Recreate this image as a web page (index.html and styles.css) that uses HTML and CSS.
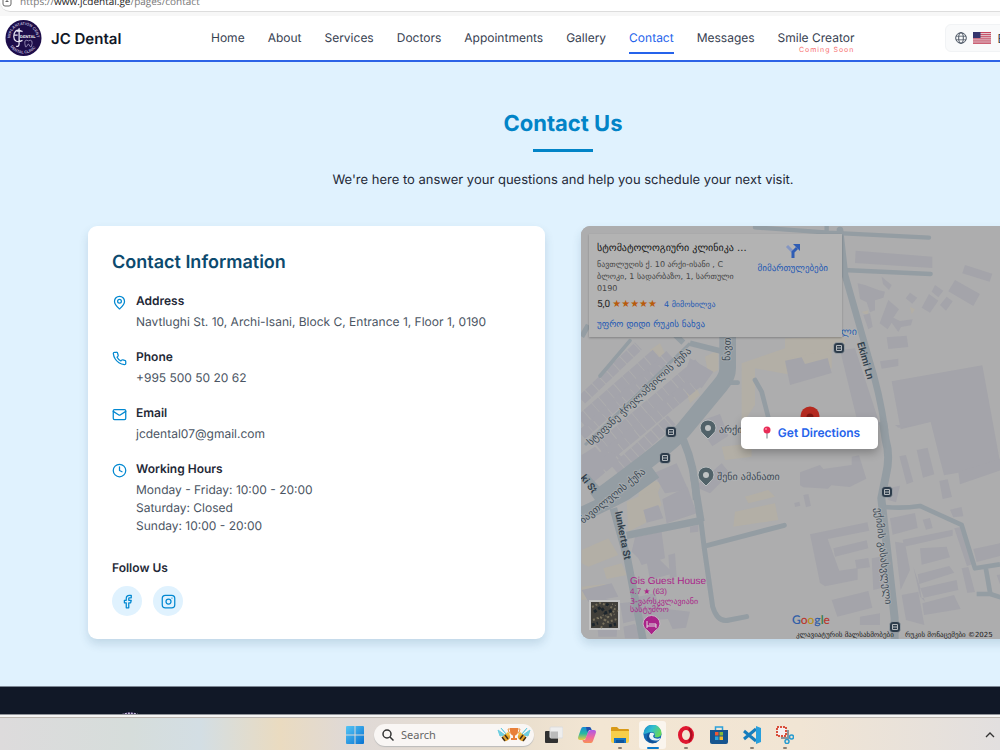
FILE: index.html
```html
<!DOCTYPE html>
<html lang="en">
<head>
<meta charset="utf-8">
<title>JC Dental - Contact</title>
<link rel="stylesheet" href="styles.css">
</head>
<body>
<div class="address-bar">
  <svg class="site-icon" viewBox="0 0 10 12"><path d="M1 0v8q0 2 2 2h4q2 0 2-2V0M3.500 5.500h3M5 3v2" fill="none" stroke="#666"/></svg>
  <span class="url">https://<b>www.jcdental.ge</b>/pages/contact</span>
</div>
<div class="viewport">
<div class="page">
  <header class="header">
    <a class="brand" href="#">
      <svg class="logo" viewBox="0 0 38 38">
        <circle cx="19" cy="19" r="18.500" fill="#1d0d4a"/>
        <path id="arc-top" d="M5.500 19a13.500 13.500 0 0 1 27 0" fill="none"/>
        <path id="arc-bottom" d="M3 19a16 16 0 0 0 32 0" fill="none"/>
        <g fill="#b9b2d2" font-family="Liberation Sans" font-weight="bold">
          <text font-size="4"><textPath href="#arc-top" startOffset="0">IMPLANTATION CENTER</textPath></text>
          <text font-size="4"><textPath href="#arc-bottom" startOffset="9">DENTAL CLINIC</textPath></text>
          <text x="15.500" y="19.500" font-size="4" fill="#fff">DENTAL</text>
        </g>
        <g fill="none" stroke="#e9e6f3" stroke-width="1.300"><path d="M14.500 9v16q0 3-3 2.500M18 12.500c-7-4-9 1-9 5s3 7 9 4M9 16h4M12 12h5"/><path d="M20.500 22q2-1.500 3.500 0 2-1.500 3.500 0 1 2-.5 6h-1l-2-3-2 3h-1q-1-4-.5-6z" stroke="#a79fc6" stroke-width=".8"/></g>
      </svg>
      <span>JC Dental</span>
    </a>
    <nav class="nav">
      <a href="#">Home</a><a href="#">About</a><a href="#">Services</a><a href="#">Doctors</a><a href="#">Appointments</a><a href="#">Gallery</a><a class="active" href="#">Contact</a><a href="#">Messages</a><a class="creator" href="#">Smile Creator<span class="soon">Coming Soon</span></a>
    </nav>
    <button class="language" type="button">
      <svg width="12" height="12" viewBox="0 0 12 12" fill="none" stroke="#4b5563"><circle cx="6" cy="6" r="5.300"/><ellipse cx="6" cy="6" rx="2.300" ry="5.300"/><path d="M1 4.200h10M1 7.800h10" stroke-width=".8"/></svg>
      <svg width="18" height="12" viewBox="0 0 18 12"><path fill="#e6d9df" d="M0 0h18v12H0z"/><path stroke="#c4455c" d="M0 .5h18M0 2.400h18M0 4.300h18M0 6.200h18M0 8.100h18M0 10h18M0 11.700h18"/><path fill="#35356d" d="M0 0h7.500v6H0z"/></svg>
      <span>EN</span>
    </button>
  </header>

  <main class="main">
    <div class="intro">
      <h1>Contact Us</h1>
      <p>We're here to answer your questions and help you schedule your next visit.</p>
    </div>
    <div class="columns">
      <section class="card">
        <h2>Contact Information</h2>
        <div class="items">
          <div class="item">
            <svg class="icon" viewBox="0 0 24 24"><path d="M20 10c0 5-5.500 10.200-7.400 11.800a1 1 0 0 1-1.200 0C9.500 20.200 4 15 4 10a8 8 0 0 1 16 0"/><circle cx="12" cy="10" r="3"/></svg>
            <div><h3>Address</h3><p>Navtlughi St. 10, Archi-Isani, Block C, Entrance 1, Floor 1, 0190</p></div>
          </div>
          <div class="item">
            <svg class="icon" viewBox="0 0 24 24"><path d="M22 16.920v3a2 2 0 0 1-2.180 2 19.790 19.790 0 0 1-8.630-3.070 19.500 19.500 0 0 1-6-6 19.790 19.790 0 0 1-3.070-8.670A2 2 0 0 1 4.110 2h3a2 2 0 0 1 2 1.720c.127.960.361 1.903.7 2.810a2 2 0 0 1-.45 2.110L8.090 9.910a16 16 0 0 0 6 6l1.270-1.270a2 2 0 0 1 2.110-.45c.907.339 1.850.573 2.810.7A2 2 0 0 1 22 16.920z"/></svg>
            <div><h3>Phone</h3><p>+995 500 50 20 62</p></div>
          </div>
          <div class="item">
            <svg class="icon" viewBox="0 0 24 24"><rect x="2" y="4" width="20" height="16" rx="2"/><path d="m22 7-8.970 5.700a1.940 1.940 0 0 1-2.060 0L2 7"/></svg>
            <div><h3>Email</h3><p>jcdental07@gmail.com</p></div>
          </div>
          <div class="item">
            <svg class="icon" viewBox="0 0 24 24"><circle cx="12" cy="12" r="10"/><path d="M12 6v6l4 2"/></svg>
            <div><h3>Working Hours</h3><p>Monday - Friday: 10:00 - 20:00<br>Saturday: Closed<br>Sunday: 10:00 - 20:00</p></div>
          </div>
        </div>
        <h3>Follow Us</h3>
        <div class="social">
          <a href="#" aria-label="Facebook"><svg class="icon" viewBox="0 0 24 24"><path d="M18 2h-3a5 5 0 0 0-5 5v3H7v4h3v8h4v-8h3l1-4h-4V7a1 1 0 0 1 1-1h3z"/></svg></a>
          <a href="#" aria-label="Instagram"><svg class="icon" viewBox="0 0 24 24"><rect x="2" y="2" width="20" height="20" rx="5"/><circle cx="12" cy="12" r="4"/><path d="M17.500 6.500h.01"/></svg></a>
        </div>
      </section>

      <section class="map" aria-label="Map">
        <svg class="map-art" viewBox="581 226 457 413" preserveAspectRatio="xMinYMin slice">
          <defs>
            <g id="stop"><rect x="-5.500" y="-5.500" width="11" height="11" rx="3.500" fill="#2d3c4b" stroke="#b4b8bc" stroke-width=".6"/><path d="M-2.500-2.500h5v5h-5zM-2.500 0h5" fill="none" stroke="#b4b9bd"/></g>
            <g id="place"><path d="M-8 0a8 8 0 1 1 16 0q0 4-4 7l-4 4-4-4q-4-3-4-7z" fill="#516269" stroke="#b9bdbf"/><circle r="3" fill="#bfc3c4"/></g>
          </defs>
          <path fill="#adadae" d="M581 226h457v413H581z"/>

          <g transform="translate(575 330) scale(.3333)">
            <g fill="#b3afa6"><path d="M390 80l40-20v60l-30 15zM500 100l130-45 140-20v80l-120 20-110-20v110l-40 60zM225 60l30-20 15 30-30 25zM335 190l30-15 10 20-30 25zM440 350l90-10v40l-80 10zM200 440l60 20-20 50-50-10z"/></g>
            <g fill="none" stroke="#a4a4ab">
              <path d="M20 210L190 48" stroke-width="30" stroke-dasharray="26 3"/>
              <path d="M20 276L250 75" stroke-width="46" stroke-dasharray="24 3 32 2"/>
              <path d="M20 315L285 75" stroke-width="32" stroke-dasharray="31 2 20 3"/>
              <path d="M75 358L375 105" stroke-width="44" stroke-dasharray="22 2 33 3"/>
              <path d="M55 410L370 150" stroke-width="40" stroke-dasharray="35 3 24 2"/>
              <path d="M120 420L290 270" stroke-width="36" stroke-dasharray="24 3"/>
              <path d="M40 445L130 370" stroke-width="38" stroke-dasharray="50 4"/>
            </g>
            <g fill="#a4a4ab"><path d="M20 375l40-25 45 50-60 60-25-30zM345 85l70 40-35 50-55-35zM385 270l50-18 25 65-48 32-30-45zM235 430l70-30 35 80-70 10zM360 470l80-70 25 30-60 60z"/></g>
            <g fill="none" stroke="#949da3" stroke-linejoin="round">
              <path d="M458-20v135q0 25-20 48L325 300Q285 345 60 510" stroke-width="50"/>
              <path d="M345 40l95 24M285 0l40 38" stroke-width="17"/>
              <path d="M30 345L345 40" stroke-width="9"/>
              <path d="M75 138L165 32" stroke-width="11" stroke-linecap="round"/>
              <path d="M325 330q35 80 40 180" stroke-width="23"/>
              <path d="M470 158h18M540 150l20 35 22 85" stroke-width="14" stroke-linecap="round"/>
              <path d="M20 20l20-35" stroke-width="16"/>
            </g>
          </g>

          <g transform="translate(575 480) scale(.3333)">
            <g fill="#b3afa6"><path d="M155 65l90-40 15 50-50 55-50 25zM20 210l80-35 30 50-90 35-20-10zM85 265l55-15 15 35-60 12zM480 95l120-25 10 50-135 20zM510 50l70-20 20 20-80 20zM20 320l70-8-15 40-55 8z"/></g>
            <g fill="#a4a4ab"><path d="M262 58l75-38 28 80-90 30zM205 90l45-15 15 40-50 13zM180 172l80-17 10 80-70 20-10-20-20-20zM215 245l35-10 45 45-70 20zM280 225l20-5 5 70-20 5zM345 140l25-5v20l-25 3zM20 330l90-20 20 40-90 15zM135 370l40-5 10 55-40 10zM145 440l35-8 20 43h-50zM190 350l50-10 15 45 90 10-12 48-40 4-14-30-80 5zM60 350l70 15-5 105H70z"/></g>
            <g fill="none" stroke="#949da3">
              <path d="M0 112q90-40 150-72L240-25" stroke-width="44"/>
              <path d="M115 85l42 150 48 250M30-10l50 55" stroke-width="23"/>
              <path d="M155 166l225-45M355-15l23 140" stroke-width="22"/>
              <path d="M378 125l10 80 25 175q15 50 50 40l52-10M398 196l230-60" stroke-width="15" stroke-linecap="round"/>
            </g>
          </g>

          <g transform="translate(785 220) scale(.3333)">
            <path fill="#b3afa6" d="M0 355l180-5v30L0 418zM230 276l20-5v18zM375 260l15 8-10 15z"/>
            <g fill="#a4a4aa"><path d="M212 92l230 18v34l-232-15zM540 135l82 26-8 24-82-25zM510 180l75 42-20 36-75-44zM450 195l25 17-15 20-20-17zM432 222l28 20-25 36-25-15zM485 230l18 14-20 28-18-17zM375 218l22 15-15 18-20-16zM305 352l60-5 5 34-60 6zM285 424l55-8v22l-50 8zM0 422l50-10 10 20 68-18 12 45-125 36zM165 390l45-5 75 230-70-20zM320 484l272-48 55 300-170 30-40-160-90 22zM218 190l22 5 40 15 20 5-5 18-25 8v30l-15 6-10-30-20-10zM290 170l30 25-8 15-18-18zM310 240l32 28-17 25 20 10 38-5-5 18-30 5-8 15-20-28-12 20-24-18zM235 285l20-5 8 40-13 8z"/></g>
            <g fill="none" stroke="#949da3" stroke-linecap="round">
              <path d="M-90 22L130 38M125 0v40M130 38l302 15M175 150l262 12" stroke-width="13"/>
              <path d="M165 30l15 135 70 245q35 110 50 220" stroke-width="20"/>
            </g>
          </g>

          <g transform="translate(785 425) scale(.3333)">
            <g fill="#a4a4aa"><path d="M-30-10h90l-90 40zM45 142l60-22 10 12 85-12v-25l22-4 22 70-50 25-55-5-10 10-74-4-10-6zM55 210l15-3 8 35-15 5zM28 234l15-4 3 12-16 4zM343 94l20-4 22 80-20 8zM395 75l33-7 20 80-34 10zM330 0h60l-50 8zM463 168l25-5 13 53-28 6zM520 140l130-40v35l-125 43zM310 190l35-8-12 50-25-8zM75 328l172-36 6 25-125 25 35 95 55-8v35l-98 20-15-10zM145 370l100-24 5 24-100 25zM210 405l40-6 5 28-40 5zM315 280l75-16 8 45-75 20zM413 284l22-5 8 30-20 5zM353 344l150-30v18l-145 33zM405 370l80-5 10 32-85 22zM398 448l95-25 15 20-105 34zM405 490l110-25 5 30-110 25zM412 535l95-25 20 42-110 18zM140 525l110-27 12 50-105 27zM225 575l60-10v35h-60zM330 350l30 5 15 80-28 60zM508 310l25-5 38 110-25 8zM565 372l80-17v38l-70 18zM350 510l50-10 18 100-55-15zM385 425l20 90 15 15zM260 400l25-5 20 90-40 10zM530 430l20-4 20 75-23 3zM495 254l35-8 5 28-30 3zM635 450l12-2v35z"/></g>
            <g fill="none" stroke="#949da3" stroke-linejoin="round">
              <path d="M294-10l8 55q15 50 0 110l-13 65 40 360v70" stroke-width="24"/>
              <path d="M300 246q55 5 105-3l125 57 40 130 75-12M602 427l14 80 31 10M575 507h40" stroke-width="14"/>
            </g>
          </g>

          <g class="geo" font-size="10">
            <text transform="translate(591 446) rotate(-43)">სტეფანე ჭრელაშვილის ქუჩა</text>
            <text transform="translate(583 524) rotate(-39)">ნავთლუღის ქუჩა</text>
            <text transform="translate(730 361) rotate(-88)">ნავთლუღის</text>
            <text transform="translate(875 508) rotate(84)">ექიმის გასასვლელი</text>
            <text x="719" y="433">არქი</text>
            <text x="717" y="480">შენი ამანათი</text>
            <text x="841" y="335" class="blue">ლი</text>
          </g>
          <g class="latin">
            <text transform="translate(857 343) rotate(74)">Ekimi Ln</text>
            <text transform="translate(615 512) rotate(79)">lunkerta St</text>
            <text transform="translate(580 478) rotate(52)">ki St</text>
          </g>
          <use href="#stop" x="671" y="432"/><use href="#stop" x="665" y="458"/><use href="#stop" x="839" y="348"/><use href="#stop" x="887" y="492"/><use href="#stop" x="895" y="627"/>
          <use href="#place" x="708" y="428"/><use href="#place" x="706" y="475"/>
          <g class="hotel"><text x="630" y="584" font-size="10">Gis Guest House</text><text x="630" y="594" font-size="8">4.7 ★ (63)</text><text x="630" y="604" font-size="8" class="geo-font">3-ვარსკვლავიანი</text><text x="630" y="612" font-size="8" class="geo-font">სასტუმრო</text></g>
          <path d="M643 624a8 8 0 1 1 17 0q0 4-5 7l-3.500 4-3.500-4q-5-3-5-7z" fill="#aa2489" stroke="#c5b8c2"/><path d="M647 621v7M647 626h9v2M649 624h7v2" stroke="#ddd" fill="none"/>
          <circle cx="810" cy="416" r="9.500" fill="#b52a20"/><circle cx="810" cy="417" r="3.500" fill="#7d1712"/>
          <g><path fill="#413f3a" stroke="#c2c2c2" stroke-width="2" d="M590 601h29v28h-29z"/><g fill="none"><path d="M592 607l8-4 9 3 9 5M593 620l7-3 8 5 9-3M601 628l5-9 8-8" stroke="#77705c" stroke-width="2" stroke-dasharray="2 2"/><path d="M594 612l7-5 4 6 8-3M592 625l6-2M609 626l7-2M606 604l4 2" stroke="#1c252c" stroke-width="3" stroke-dasharray="3 2"/><path d="M598 619l5-4 6 2 6-3M612 604l5 2" stroke="#918a75" stroke-dasharray="1 2"/></g></g>
          <text x="792" y="624" font-family="Lato" font-size="12" font-weight="600"><tspan fill="#315ea7">G</tspan><tspan fill="#b93c32">o</tspan><tspan fill="#b89120">o</tspan><tspan fill="#315ea7">g</tspan><tspan fill="#347b45">l</tspan><tspan fill="#b93c32">e</tspan></text>
          <text class="credits" x="796" y="637">კლავიატურის მალსახმობები</text><text class="credits" x="905" y="637">რუკის მონაცემები ©2025</text>
        </svg>
        <div class="place-card">
          <div class="place-info">
            <strong>სტომატოლოგიური კლინიკა ...</strong>
            <p>ნავთლუღის ქ. 10 არქი-ისანი , C<br>ბლოკი, 1 სადარბაზო, 1, სართული<br>0190</p>
            <div class="rating"><span>5,0</span><span class="stars">★★★★★</span><a href="#">4 მიმოხილვა</a></div>
            <a class="larger" href="#">უფრო დიდი რუკის ნახვა</a>
          </div>
          <a class="route" href="#"><svg width="16" height="16" viewBox="0 0 16 16"><path d="M2 3l6 6" stroke="#8496c2" stroke-width="3"/><path d="M8 15V9l4-4" fill="none" stroke="#2f5db4" stroke-width="3"/><path d="M8 1h7v7z" fill="#2f5db4"/></svg><span>მიმართულებები</span></a>
        </div>
        <div class="overlay"><a class="directions" href="#"><svg width="8" height="13" viewBox="0 0 8 13"><path d="M4 6v6.500" stroke="#8f9aa0" stroke-width="1.300"/><circle cx="4" cy="4" r="3.500" fill="#e82c57"/><circle cx="3" cy="3" r="1" fill="#ff8ba3"/></svg>Get Directions</a></div>
      </section>
    </div>
  </main>
  <footer class="footer"><svg width="38" height="38" viewBox="0 0 38 38"><circle cx="19" cy="19" r="18.500" fill="#28104f"/><path d="M11 3q8-3 16 0" fill="none" stroke="#c8c0dc" stroke-width="2" stroke-dasharray="2 1"/></svg></footer>
</div>
</div>

<div class="taskbar">
  <button class="slot" aria-label="Start"><svg width="18" height="18" viewBox="0 0 18 18"><defs><linearGradient id="win" x2="1" y2="1"><stop stop-color="#56c5f5"/><stop offset="1" stop-color="#0873d2"/></linearGradient></defs><path fill="url(#win)" d="M0 1q0-1 1-1h7.500v8.500H0zM9.500 0H17q1 0 1 1v7.500H9.500zM0 9.500h8.500V18H1q-1 0-1-1zM9.500 9.500H18V17q0 1-1 1H9.500z"/></svg></button>
  <label class="search"><svg width="12" height="12" viewBox="0 0 12 12" fill="none" stroke="#333" stroke-width="1.500"><circle cx="5" cy="5" r="4"/><path d="M8 8l3.500 3.500"/></svg><input type="text" placeholder="Search" aria-label="Search">
    <svg width="34" height="16" viewBox="0 0 34 16"><g id="bee"><path d="M1 3l7 5-5 1zM4 1l5 6z" fill="#6ccde0" stroke="#6ccde0"/><ellipse cx="9" cy="10.500" rx="4" ry="3.300" fill="#e4a32b" transform="rotate(-35 9 10)"/><path d="M5 10l3 4M8 8l3 4" stroke="#3d2d1d" stroke-width="1.400"/><circle cx="11" cy="7" r="1.700" fill="#f2bf3f"/></g><use href="#bee" transform="translate(34 0) scale(-1 1)"/><path d="M13 1h8v3q0 4-4 5-4-1-4-5zM16 8h2v3h2v2h-6v-2h2z" fill="#e8803a"/><path d="M13 2h-2q0 4 3 4M21 2h2q0 4-3 4" fill="none" stroke="#ef9a4e"/></svg></label>
  <button class="slot" aria-label="Task view"><svg width="18" height="18" viewBox="0 0 18 18"><rect y="5" width="13" height="12" rx="1" fill="#303030"/><rect x="5" y="1" width="13" height="11" rx="1" fill="#eee" stroke="#ddd"/><path d="M5.500 5.500H13V12H5.500z" fill="#bbb"/></svg></button>
  <button class="slot" aria-label="Copilot"><svg width="18" height="18" viewBox="0 0 18 18"><defs><linearGradient id="c1" y2="1" x2="0"><stop stop-color="#168bd8"/><stop offset=".5" stop-color="#29b7a2"/><stop offset="1" stop-color="#f0cb3b"/></linearGradient><linearGradient id="c2" y2="1" x2="0"><stop stop-color="#ac58e8"/><stop offset=".6" stop-color="#f26a9a"/><stop offset="1" stop-color="#f79154"/></linearGradient></defs><path d="M5 1h6q2 0 2.500 3H11L8 12q-1 2-3 2H2q-3 0-1.500-4L3 3q.6-2 2-2z" fill="url(#c1)"/><path d="M13 17H7q-2 0-2.500-3H7l3-8q1-2 3-2h3q3 0 1.500 4L15 15q-.6 2-2 2z" fill="url(#c2)"/><path d="M8 1h3q2 0 2.500 3H11L9 6z" fill="#234fad"/></svg></button>
  <button class="slot running" aria-label="Files"><svg width="18" height="18" viewBox="0 0 18 18"><path d="M0 2q0-1 1-1h5l2 2h9q1 0 1 1v11H0z" fill="#d99a18"/><path d="M0 5h18v10q0 2-2 2H2q-2 0-2-2z" fill="#f8cf4a"/><path d="M3 12h12v5H3z" fill="#1573c4"/><path d="M5 14h8v3H5z" fill="#0d559c"/></svg></button>
  <button class="slot running current" aria-label="Edge"><svg width="19" height="19" viewBox="0 0 19 19"><defs><linearGradient id="edge" y2=".5"><stop stop-color="#1683cc"/><stop offset=".5" stop-color="#31bdd0"/><stop offset="1" stop-color="#64d65d"/></linearGradient></defs><circle cx="9.500" cy="9.500" r="9" fill="#1469b3"/><path d="M.5 9A9 9 0 0 1 18.500 8c0 4-4 5-7 4 1-3 0-5-3-5S3 9 .5 9z" fill="url(#edge)"/><path d="M7 8c-3 5 2 9 9 7q1-1 1.500-2c-4 2-10-.5-6-4q-2-2-4.500-1z" fill="#eaf3f8"/><path d="M7 8c-3 5 1 9 7 9-3 2-11 1-10-5 .4-3 1.500-4 3-4z" fill="#124d92"/></svg></button>
  <button class="slot running" aria-label="Opera"><svg width="18" height="18" viewBox="0 0 18 18"><ellipse cx="9" cy="9" rx="6" ry="7" fill="none" stroke="#df1730" stroke-width="4"/><path d="M12 2.500q5 6.500 0 13" fill="none" stroke="#a90d20" stroke-width="2"/></svg></button>
  <button class="slot" aria-label="Store"><svg width="18" height="18" viewBox="0 0 18 18"><path d="M5.500 4V1h7v3" fill="none" stroke="#2ba0da" stroke-width="1.500"/><path d="M0 4h18v12q0 2-2 2H2q-2 0-2-2z" fill="#17558f"/><path fill="#ef5a35" d="M5 6h3.500v3.500H5z"/><path fill="#83ba3b" d="M9.500 6H13v3.500H9.500z"/><path fill="#29a7df" d="M5 10.500h3.500V14H5z"/><path fill="#f6bc2f" d="M9.500 10.500H13V14H9.500z"/></svg></button>
  <button class="slot running" aria-label="Code"><svg width="18" height="18" viewBox="0 0 18 18"><path d="M1 5l12 10M1 13L13 3" stroke="#167dbd" stroke-width="3"/><path d="M13 0l5 2v14l-5 2z" fill="#279fdd"/></svg></button>
  <button class="slot running" aria-label="Snipping tool"><svg width="18" height="18" viewBox="0 0 18 18"><path d="M1 1h9v9H1z" fill="#f5eeee" stroke="#d9503c" stroke-width="2" stroke-dasharray="2 1"/><path d="M12 4v9M5 12h8" stroke="#8b949b" stroke-width="2"/><circle cx="11" cy="15.500" r="2" fill="none" stroke="#249bd1" stroke-width="1.500"/><circle cx="15.500" cy="11" r="2" fill="none" stroke="#249bd1" stroke-width="1.500"/></svg></button>
  <button class="slot tray" aria-label="Hidden icons"><svg width="10" height="6" viewBox="0 0 10 6"><path d="M1 5l4-4 4 4" fill="none" stroke="#333" stroke-width="1.300"/></svg></button>
</div>
</body>
</html>
```
FILE: styles.css
```css
* { box-sizing: border-box; margin: 0; padding: 0; }
body { display: flex; flex-direction: column; height: 100vh; overflow: hidden; background: #f7f7f7; color: #1f2937; font-family: Inter, "Liberation Sans", sans-serif; font-size: 12px; text-rendering: geometricPrecision; }
a { color: inherit; text-decoration: none; }
button, input { border: 0; background: none; font: inherit; color: inherit; }

.address-bar { display: flex; flex: none; align-items: flex-end; gap: 8px; height: 12px; margin-bottom: 4px; padding: 0 2px 3px; border-bottom: 1px solid #ddd; border-radius: 0 0 0 10px; background: #fff; overflow: hidden; }
.site-icon { flex: none; width: 10px; height: 12px; }
.url { color: #777; font: 10px/14px "Open Sans", sans-serif; }
.url b { color: #222; font-weight: normal; }

.viewport { flex: 1; min-height: 0; overflow: hidden; }
.page { width: 112.6%; background: #e0f2fe; }
.header { display: flex; align-items: center; height: 46px; padding-left: 5px; border-bottom: 2px solid #2d63e6; background: #fff; }
.brand { display: flex; flex: none; align-items: center; gap: 9px; width: 206px; color: #111827; font-size: 15px; font-weight: 600; }
.logo { width: 37px; height: 38px; }
.nav { display: flex; gap: 23px; color: #374151; font-size: 12px; line-height: 28px; white-space: nowrap; }
.nav .active { border-bottom: 2px solid #2563eb; margin-bottom: -2px; color: #2563eb; }
.creator { position: relative; }
.soon { position: absolute; right: 0; bottom: -3px; color: #f87171; font-size: 7px; line-height: 10px; letter-spacing: 1px; }
.language { display: flex; align-items: center; gap: 6px; height: 28px; margin-left: 91px; padding: 0 9px; border: 1px solid #f1f3f5; border-radius: 6px; background: #f9fafb; color: #374151; }

.main { padding: 48px 88px 47px; }
.intro { display: flex; flex-direction: column; align-items: center; margin-bottom: 36px; }
h1 { color: #0284c7; font-size: 22px; line-height: 28px; font-weight: 700; }
h1::after { content: ""; display: block; width: 60px; height: 3px; margin: 11px auto 18px; background: #0284c7; }
.intro p { color: #1f2937; font-size: 13px; line-height: 20px; }
.columns { display: grid; grid-template-columns: 1fr 1fr; gap: 36px; }
.card { padding: 24px 24px 23px; border-radius: 9px; background: #fff; box-shadow: 0 5px 10px rgba(30, 80, 110, .16); }
h2 { margin-bottom: 17px; color: #0c4a6e; font-size: 18px; line-height: 25px; font-weight: 600; }
h3 { color: #1f2937; font-size: 12px; line-height: 18px; font-weight: 600; }
.items { display: grid; gap: 17px; margin-bottom: 24px; }
.item { display: flex; gap: 9px; color: #4b5563; line-height: 18px; }
.item h3 { margin-bottom: 3px; }
.icon { flex: none; width: 15px; height: 15px; fill: none; stroke: #0288d1; stroke-width: 2; stroke-linecap: round; stroke-linejoin: round; }
.item .icon { margin-top: 3px; }
.social { display: flex; gap: 11px; margin-top: 9px; }
.social a { display: grid; place-items: center; width: 30px; height: 30px; border-radius: 50%; background: #e0f2fe; }

.map { position: relative; overflow: hidden; border-radius: 9px; background: #adadae; box-shadow: 0 5px 10px rgba(30, 80, 110, .16); }
.map-art { position: absolute; inset: 0; width: 100%; height: 100%; }
.geo, .geo-font { font-family: "DejaVu Sans", sans-serif; }
.geo { fill: #3e4a55; stroke: #b4b7b9; stroke-width: 2px; stroke-opacity: .5; paint-order: stroke; }
.geo .blue { fill: #2b5fae; }
.latin { fill: #303e4a; font: 600 10px Roboto, sans-serif; }
.hotel { fill: #aa2489; font-family: "Liberation Sans", sans-serif; }
.hotel .geo-font { font-family: "DejaVu Sans", sans-serif; }
.credits { fill: #202020; font: 7px "DejaVu Sans", sans-serif; }
.place-card { position: absolute; top: 8px; left: 8px; display: flex; justify-content: space-between; width: 253px; height: 103px; padding: 9px 14px 8px 8px; background: #b3b3b3; box-shadow: 0 1px 2px rgba(0, 0, 0, .25); color: #444; font: 8px/12px "DejaVu Sans", sans-serif; white-space: nowrap; }
.place-card a { color: #2459b3; }
.place-info strong { display: block; margin-bottom: 4px; color: #151515; font-size: 10px; font-weight: 400; }
.rating { display: flex; align-items: center; margin: 4px 0 8px; }
.rating span:first-child { color: #222; font: 10px/12px Roboto, sans-serif; }
.rating .stars { margin: 0 7px 0 2px; color: #b85b0c; font-size: 10px; }
.place-card .larger, .place-card .route { font-size: 9px; }
.route { display: flex; flex-direction: column; align-items: center; gap: 4px; }
.overlay { position: absolute; inset: 0; display: grid; place-items: center; }
.directions { display: flex; align-items: center; gap: 7px; padding: 6px 18px 6px 22px; border-radius: 5px; background: #fff; box-shadow: 0 4px 8px rgba(0, 0, 0, .25); color: #2563eb; font-size: 12px; line-height: 20px; font-weight: 600; }
.footer { height: 200px; padding: 25px 111px; border-top: 1px solid #7d8794; background: #111827; }

.taskbar { display: flex; flex: none; align-items: center; gap: 6px; height: 36px; padding: 4px 0 0 341px; border-top: 1px solid #92959b; background: linear-gradient(#f5f4f3 0 2px, #bbb5b0 2px 3px, transparent 3px), linear-gradient(90deg, #dddbdc, #d6dddb 13%, #d3dee4 20%, #eadbc0 28%, #dfd9d7 35%, #eadfce 52%, #f3e6d3 60%, #f1e5d4 80%, #e2dfdf); }
.slot { position: relative; display: grid; flex: none; place-items: center; width: 27px; height: 28px; border-radius: 3px; }
.search { display: flex; flex: none; align-items: center; gap: 7px; width: 160px; height: 22px; padding: 0 3px 0 8px; border-radius: 11px; background: #f9f6f4; box-shadow: 0 1px 1px #bbb; }
.search input { flex: 1; min-width: 0; outline: 0; font-size: 11px; font-family: "Noto Sans", sans-serif; }
.search input::placeholder { color: #666; opacity: 1; }
.search svg { flex: none; }
.current { background: #faf5ee; }
.running::after { content: ""; position: absolute; bottom: 0; width: 4px; height: 2px; border-radius: 1px; background: #8b8175; }
.current::after { width: 12px; background: #0879cb; }
.tray { width: 20px; margin-left: auto; }
```
